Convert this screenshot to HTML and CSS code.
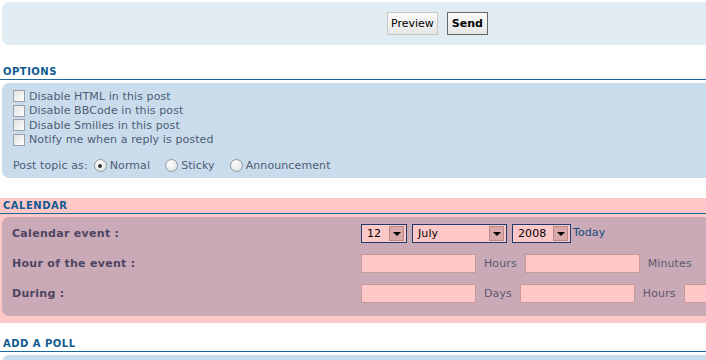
FILE: index.html
```html
<!DOCTYPE html>
<html lang="en">
  <head>
    <meta charset="UTF-8" />
    <title>Post a new topic</title>
    <link rel="stylesheet" href="styles.css">
  </head>
  <body>
    <div class="panel actions">
      <button class="button">Preview</button>
      <button class="button main">Send</button>
    </div>

    <h3 class="heading first">Options</h3>
    <div class="panel options">
      <label class="check"><span class="box"></span>Disable HTML in this post</label>
      <label class="check"><span class="box"></span>Disable BBCode in this post</label>
      <label class="check"><span class="box"></span>Disable Smilies in this post</label>
      <label class="check"><span class="box"></span>Notify me when a reply is posted</label>
      <div class="topic-type">
        <span>Post topic as:</span>
        <label class="radio"><span class="dot checked"></span>Normal</label>
        <label class="radio"><span class="dot"></span>Sticky</label>
        <label class="radio"><span class="dot"></span>Announcement</label>
      </div>
    </div>

    <div class="calendar">
      <h3 class="heading">Calendar</h3>
      <div class="panel event">
        <div class="row">
          <span class="label">Calendar event :</span>
          <div class="controls">
            <div class="select small"><span>12</span><i class="arrow"></i></div>
            <div class="select month"><span>July</span><i class="arrow"></i></div>
            <div class="select year"><span>2008</span><i class="arrow"></i></div>
            <a class="today" href="#">Today</a>
          </div>
        </div>
        <div class="row">
          <span class="label">Hour of the event :</span>
          <div class="controls">
            <input class="field" type="text" />
            <span class="unit">Hours</span>
            <input class="field" type="text" />
            <span class="unit">Minutes</span>
          </div>
        </div>
        <div class="row">
          <span class="label">During :</span>
          <div class="controls">
            <input class="field" type="text" />
            <span class="unit">Days</span>
            <input class="field" type="text" />
            <span class="unit">Hours</span>
            <input class="field" type="text" />
          </div>
        </div>
      </div>
    </div>

    <h3 class="heading poll">Add a poll</h3>
    <div class="panel options tail"></div>
  </body>
</html>
```

FILE: styles.css
```css
* {
  margin: 0;
  padding: 0;
  box-sizing: border-box;
}
body {
  width: 706px;
  height: 360px;
  overflow: hidden;
  font-family: "DejaVu Sans", Verdana, sans-serif;
  font-size: 11px;
  letter-spacing: 0.1px;
  color: #4c5d77;
  background: #fff;
}
.panel {
  margin-left: 2px;
  border-radius: 7px 0 0 7px;
  overflow: hidden;
}
/* top buttons */
.actions {
  margin-top: 2px;
  height: 43px;
  background: #e1ebf2;
  display: flex;
  align-items: center;
  gap: 9px;
  padding-left: 385px;
}
.button {
  height: 23px;
  padding: 0 3px;
  font-family: Tahoma, "DejaVu Sans", sans-serif;
  font-size: 11px;
  letter-spacing: 0;
  color: #000;
  background: linear-gradient(#fafafa, #e6e6e6);
  border: 1px solid #c6c6c6;
}
.button.main {
  font-weight: bold;
  border-color: #666;
  padding: 0 4px;
}
/* section headings */
.heading {
  height: 15px;
  line-height: 13px;
  padding-left: 3px;
  font-size: 10px;
  font-weight: bold;
  letter-spacing: 0.5px;
  text-transform: uppercase;
  color: #105a8f;
  border-bottom: 1px solid #1a6a9e;
  margin-bottom: 3px;
}
.heading.first {
  margin-top: 20px;
}
/* options */
.options {
  background: #cadceb;
  padding: 6px 0 4px 11px;
}
.check {
  display: flex;
  align-items: center;
  height: 14.5px;
  gap: 4px;
}
.box {
  width: 12px;
  height: 12px;
  border: 1px solid #9aa1ab;
  background: linear-gradient(135deg, #e3e3e3, #fdfdfd);
}
.topic-type {
  display: flex;
  align-items: center;
  margin-top: 10px;
  height: 17px;
}
.topic-type > span {
  margin-right: 6px;
}
.radio {
  display: flex;
  align-items: center;
  gap: 3px;
  margin-right: 15px;
}
.dot {
  width: 13px;
  height: 13px;
  border-radius: 50%;
  border: 1px solid #8e97a4;
  background: radial-gradient(circle at 40% 35%, #fff, #dcdcdc);
  display: grid;
  place-items: center;
}
.dot.checked::after {
  content: "";
  width: 4px;
  height: 4px;
  border-radius: 50%;
  background: #333;
}
/* calendar */
.calendar {
  margin-top: 20px;
  background: #ffc8c8;
  padding: 1px 0 7px;
}
.event {
  background: #c9aab6;
  padding: 6px 0 13px 10px;
  display: flex;
  flex-direction: column;
  gap: 10px;
}
.row {
  display: flex;
  align-items: center;
  height: 20px;
}
.label {
  flex-shrink: 0;
  width: 349px;
  font-weight: bold;
  letter-spacing: 0.3px;
  color: #4d4463;
}
.controls {
  display: flex;
  align-items: center;
  gap: 8px;
  color: #5d5870;
}
.select {
  flex-shrink: 0;
  height: 19px;
  border: 1px solid #1d3c6b;
  background: #ffc8c8;
  display: flex;
  align-items: center;
  justify-content: space-between;
  padding: 0 2px 0 5px;
  color: #000;
  margin-right: -3px;
}
.select.small { width: 46px; }
.select.month { width: 95px; }
.select.year { width: 59px; }
.arrow {
  width: 15px;
  height: 15px;
  background: #d9a9a9;
  border: 1px solid #b88;
  display: grid;
  place-items: center;
}
.arrow::after {
  content: "";
  border: 4px solid transparent;
  border-top: 4px solid #000;
  border-bottom: 0;
  margin-top: 1px;
}
.today {
  color: #154a80;
  text-decoration: none;
  margin-left: -3px;
  margin-top: -2px;
}
.field {
  flex-shrink: 0;
  width: 115px;
  height: 19px;
  background: #ffc8c8;
  border: 1px solid #c79a9a;
}
/* poll */
.heading.poll {
  margin-top: 14px;
}
.tail {
  height: 20px;
}
```
